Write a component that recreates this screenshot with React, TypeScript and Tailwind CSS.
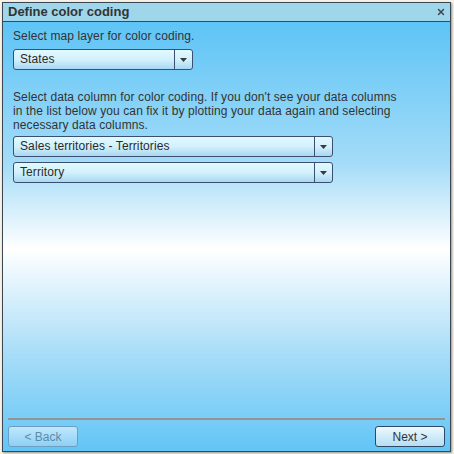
import { X } from "lucide-react"

function Select({ value, width }: { value: string; width: string }) {
  return (
    <div className={`flex h-[21px] ${width} items-stretch rounded-[3px] border border-[#3d4f70] bg-gradient-to-b from-[#e2f9ff] via-[#d2f1fc] to-[#a9d7f1]`}>
      <div className="flex-1 pl-[6px] text-[12px] leading-[19px] tracking-[0.1px] text-[#2b2b2b]">{value}</div>
      <div className="flex w-[18px] items-center justify-center border-l border-[#3d4f70]">
        <svg width="7" height="4" viewBox="0 0 7 4"><path d="M0 0h7L3.5 4z" fill="#3a3a3a" /></svg>
      </div>
    </div>
  )
}

export default function App() {
  return (
    <div className="h-[454px] w-[454px] bg-[#f6f2e6] pl-[2px] pt-[2px]" style={{ fontFamily: '"Liberation Sans", Arial, sans-serif' }}>
      <div className="flex h-[450px] w-[449px] flex-col border border-[#3b4756] shadow-[1px_1px_2px_rgba(0,0,0,0.4)]">
        <div className="flex h-[19px] items-center justify-between border-b border-[#3b4756] bg-[#9fd6ea] pl-[5px] pr-[4px]">
          <span className="text-[13px] font-bold text-[#333]">Define color coding</span>
          <X className="h-[10px] w-[10px] text-[#3b4756]" strokeWidth={3.5} />
        </div>
        <div className="flex flex-1 flex-col bg-[linear-gradient(to_bottom,#5ec4f6_0%,#a4dcf8_33%,#ffffff_53%,#a6dcf8_78%,#62c5f6_100%)] px-[10px]">
          <p className="mt-[7px] text-[12px] leading-[14px] tracking-[0.1px] text-[#333]">Select map layer for color coding.</p>
          <div className="mt-[6px]">
            <Select value="States" width="w-[180px]" />
          </div>
          <p className="mt-[20px] text-[12px] leading-[14px] tracking-[0.1px] text-[#333]">
            Select data column for color coding. If you don't see your data columns<br />
            in the list below you can fix it by plotting your data again and selecting<br />
            necessary data columns.
          </p>
          <div className="mt-[4px]">
            <Select value="Sales territories - Territories" width="w-[320px]" />
          </div>
          <div className="mt-[5px]">
            <Select value="Territory" width="w-[320px]" />
          </div>
          <div className="flex-1" />
          <div className="-mx-[5px] border-t-2 border-[#949494]" />
          <div className="-mx-[5px] flex justify-between pb-[4px] pt-[6px]">
            <button className="h-[21px] w-[70px] rounded-[3px] border border-[#6d9ec4] bg-gradient-to-b from-[#bfe8fc] to-[#8dd0f5] text-[12px] text-[#5f8ba8]">&lt; Back</button>
            <button className="h-[21px] w-[70px] rounded-[3px] border border-[#2f4868] bg-gradient-to-b from-[#eef9ff] to-[#b5def3] text-[12px] text-[#333]">Next &gt;</button>
          </div>
        </div>
      </div>
    </div>
  )
}
